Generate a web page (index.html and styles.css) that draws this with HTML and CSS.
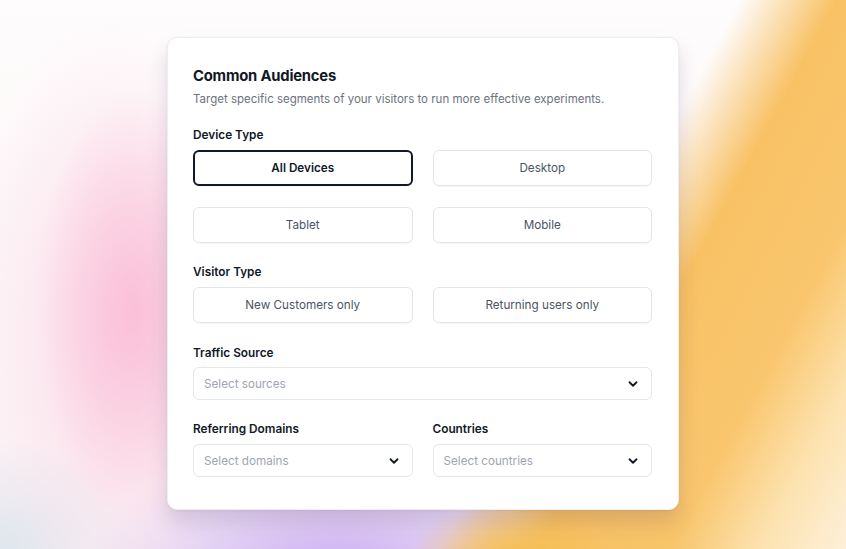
FILE: index.html
```html
<!DOCTYPE html>
<html>
<head>
<meta charset="utf-8">
<link rel="stylesheet" href="styles.css">
</head>
<body>
<div class="page">
  <div class="card">
    <h1 class="title">Common Audiences</h1>
    <p class="subtitle">Target specific segments of your visitors to run more effective experiments.</p>

    <div class="label first">Device Type</div>
    <div class="grid">
      <button class="opt selected">All Devices</button>
      <button class="opt">Desktop</button>
      <button class="opt">Tablet</button>
      <button class="opt">Mobile</button>
    </div>

    <div class="label">Visitor Type</div>
    <div class="grid">
      <button class="opt">New Customers only</button>
      <button class="opt">Returning users only</button>
    </div>

    <div class="label traffic">Traffic Source</div>
    <div class="select">
      <span>Select sources</span>
      <svg class="chev" viewBox="0 0 12 12" width="12" height="12"><path d="M2.5 4.25 6 7.75 9.5 4.25" fill="none" stroke="#111827" stroke-width="1.8" stroke-linecap="round" stroke-linejoin="round"/></svg>
    </div>

    <div class="grid lower">
      <div class="field">
        <div class="label inner">Referring Domains</div>
        <div class="select">
          <span>Select domains</span>
          <svg class="chev" viewBox="0 0 12 12" width="12" height="12"><path d="M2.5 4.25 6 7.75 9.5 4.25" fill="none" stroke="#111827" stroke-width="1.8" stroke-linecap="round" stroke-linejoin="round"/></svg>
        </div>
      </div>
      <div class="field">
        <div class="label inner">Countries</div>
        <div class="select">
          <span>Select countries</span>
          <svg class="chev" viewBox="0 0 12 12" width="12" height="12"><path d="M2.5 4.25 6 7.75 9.5 4.25" fill="none" stroke="#111827" stroke-width="1.8" stroke-linecap="round" stroke-linejoin="round"/></svg>
        </div>
      </div>
    </div>
  </div>
</div>
</body>
</html>
```

FILE: styles.css
```css
html, body {
  margin: 0;
  padding: 0;
  width: 846px;
  height: 549px;
  overflow: hidden;
}
body {
  font-family: Inter, "Noto Sans", Arial, sans-serif;
  color: #111827;
  background:
    radial-gradient(ellipse 100px 60px at 510px 560px, rgba(244, 190, 80, 0.95), rgba(244, 190, 80, 0) 100%),
    linear-gradient(118.6deg,
      rgba(248, 190, 90, 0) 650px,
      rgba(248, 190, 92, 0.95) 735px,
      rgba(249, 194, 98, 0.92) 850px,
      rgba(252, 222, 160, 0.85) 925px,
      rgba(253, 240, 215, 0.9) 1005px),
    radial-gradient(ellipse 110px 70px at 640px 560px, rgba(210, 220, 170, 0.9), rgba(210, 220, 170, 0) 100%),
    radial-gradient(ellipse 100px 220px at 135px 310px, rgba(250, 180, 208, 0.75), rgba(250, 195, 215, 0) 100%),
    radial-gradient(ellipse 150px 300px at 110px 320px, rgba(250, 205, 225, 0.6), rgba(250, 205, 225, 0) 100%),
    radial-gradient(ellipse 260px 130px at 340px 575px, rgba(200, 170, 242, 1), rgba(200, 170, 242, 0) 100%),
    radial-gradient(ellipse 140px 110px at 0px 549px, rgba(222, 230, 238, 1), rgba(222, 230, 238, 0) 100%),
    linear-gradient(180deg, #fefcfc 0%, #fbf3f5 100%);
}
.page {
  padding-top: 37px;
  display: flex;
  justify-content: center;
}
.card {
  width: 459px;
  background: #fff;
  border: 1px solid #eceef1;
  border-radius: 10px;
  padding: 28px 26px 32px 25px;
  box-shadow: 0 12px 20px rgba(70, 45, 95, 0.16), 0 1px 3px rgba(0, 0, 0, 0.05);
}
.title {
  margin: 0;
  font-size: 14.8px;
  line-height: 20px;
  font-weight: 700;
  letter-spacing: -0.2px;
  color: #111827;
}
.subtitle {
  margin: 4px 0 0;
  font-size: 11.5px;
  line-height: 18px;
  color: #6b7280;
}
.label {
  font-size: 11.8px;
  line-height: 16px;
  font-weight: 600;
  color: #111827;
  margin: 21px 0 7px;
}
.label.first {
  margin-top: 19px;
}
.label.traffic {
  margin-top: 22px;
  margin-bottom: 6px;
}
.label.inner {
  margin-top: 0;
}
.grid {
  display: grid;
  grid-template-columns: 1fr 1fr;
  column-gap: 20px;
  row-gap: 21px;
}
.grid.lower {
  margin-top: 21px;
}
.opt {
  height: 36px;
  background: #fff;
  border: 1px solid #e2e5ea;
  border-radius: 6px;
  font-family: inherit;
  font-size: 11.7px;
  color: #4b5563;
  padding: 0;
  box-shadow: 0 1px 1px rgba(0, 0, 0, 0.03);
}
.opt.selected {
  border: 2px solid #111827;
  color: #111827;
  font-weight: 600;
}
.select {
  height: 33px;
  box-sizing: border-box;
  border: 1px solid #e5e7eb;
  border-radius: 6px;
  display: flex;
  align-items: center;
  justify-content: space-between;
  padding: 0 12px 0 10px;
  font-size: 11.7px;
  color: #a0a6b0;
}
.chev {
  display: block;
}
```
